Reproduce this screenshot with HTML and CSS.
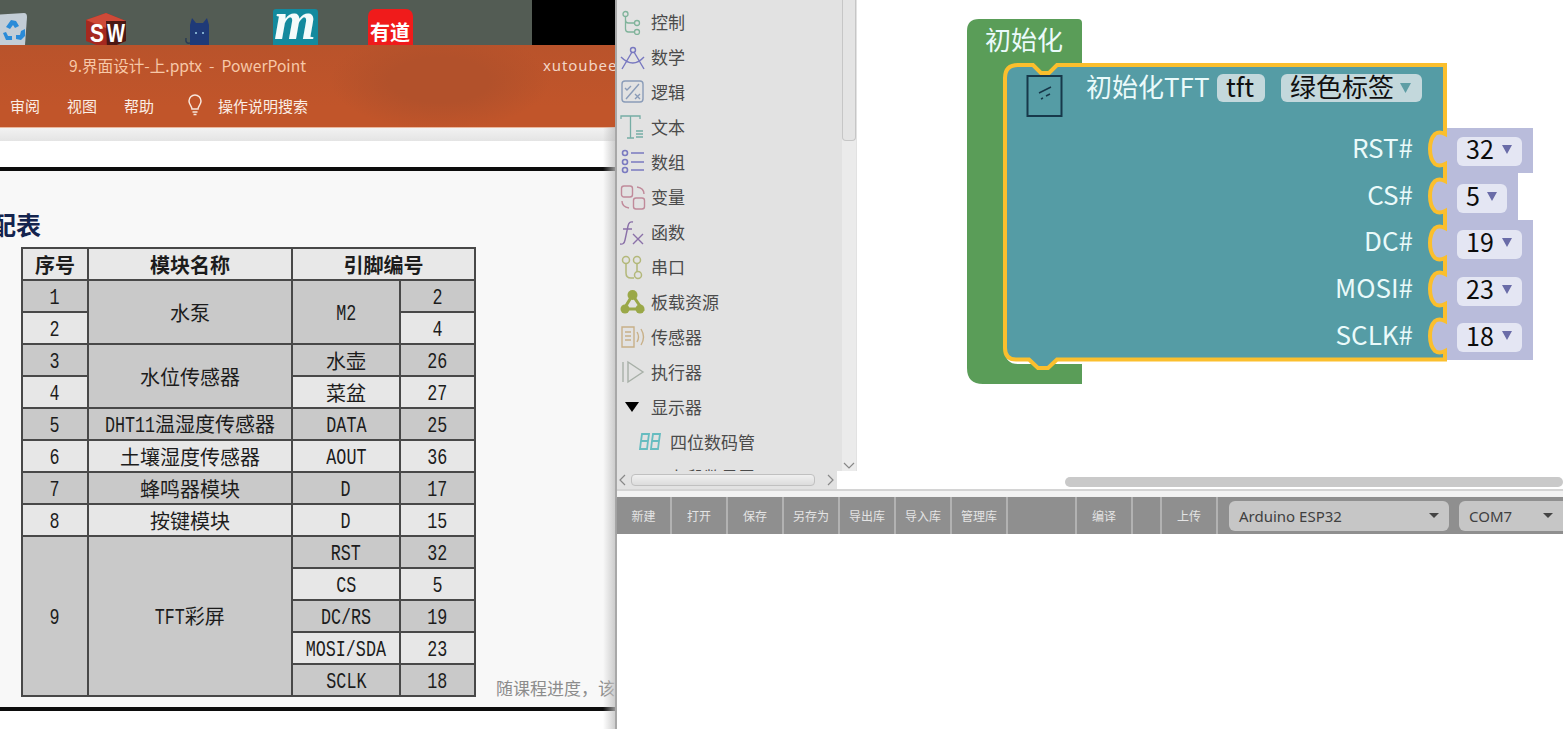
FILE: index.html
```html
<!DOCTYPE html>
<html lang="zh">
<head>
<meta charset="utf-8">
<title>Mixly</title>
<link rel="stylesheet" href="styles.css">
</head>
<body>
<div class="app">
  <section class="left">
    <div class="desktop">
      <svg class="desk-icons" width="532" height="45" viewBox="0 0 532 45">
        <path d="M-6 15 L24 13 Q27 13 27 17 L25 45 H-6Z" fill="#c3cdd6"/>
        <path d="M6 27l5-7 5 1 3 5-4 2-2-3-3 4zM3 33l3-1 2 4h4v4H6zM25 29l-4 2-1 4h-4v4l5 1 4-4z" fill="#2a8bd8"/>
        <path d="M86 20L106 13l20 8v20l-19 8-21-8z" fill="#a5281f"/>
        <path d="M86 20L106 13l20 8-20 7z" fill="#cf4a38"/>
        <path d="M106 21h20v20l-19 8z" fill="#4a1814"/>
        <text class="sw" x="90" y="42" textLength="14" lengthAdjust="spacingAndGlyphs">S</text>
        <text class="sw" x="107" y="42" textLength="18" lengthAdjust="spacingAndGlyphs">W</text>
        <path d="M190 45V25l2-7 4 5h7l4-5 2 7v20z" fill="#1f3a78"/>
        <circle cx="196" cy="33" r="1" fill="#9fd0e8"/><circle cx="203" cy="33" r="1" fill="#9fd0e8"/>
        <path d="M190 43q-5 1-4-5" fill="none" stroke="#2b3c54" stroke-width="1.500"/>
        <rect x="273" y="9" width="45" height="40" rx="3" fill="#138a9e"/>
        <text class="mm" x="295" y="39">m</text>
        <rect x="368" y="9" width="45" height="42" rx="7" fill="#f01b1b"/>
        <text class="yd" x="390" y="40">有道</text>
      </svg>
      <div class="desk-black"></div>
    </div>
    <div class="ppt-head">
      <div class="ppt-title">
        <span class="doc">9.界面设计-上.pptx&nbsp; -&nbsp; PowerPoint</span>
        <span class="user">xutoubee</span>
      </div>
      <div class="ppt-tabs">
        <span class="tab">审阅</span>
        <span class="tab">视图</span>
        <span class="tab">帮助</span>
        <svg class="bulb" width="18" height="22" viewBox="0 0 18 22"><path d="M6 15c0-3-3-4-3-8a6 6 0 0 1 12 0c0 4-3 5-3 8zM6.500 18h5M7.500 20.500h3" fill="none" stroke="#f7e6dc" stroke-width="1.500"/></svg>
        <span class="tab search">操作说明搜索</span>
      </div>
    </div>
    <div class="ppt-strip"></div>
    <div class="ppt-white"></div>
    <div class="slide">
      <h2 class="slide-title">配表</h2>
      <div class="slide-body">
        <table class="pins">
          <colgroup><col class="c1"><col class="c2"><col class="c3"><col class="c4"></colgroup>
          <thead>
            <tr class="head"><th>序号</th><th>模块名称</th><th colspan="2">引脚编号</th></tr>
          </thead>
          <tbody>
            <tr>
              <td class="d"><span class="m">1</span></td>
              <td class="d" rowspan="2">水泵</td>
              <td class="d" rowspan="2"><span class="m">M2</span></td>
              <td class="d"><span class="m">2</span></td>
            </tr>
            <tr><td class="l"><span class="m">2</span></td><td class="l"><span class="m">4</span></td></tr>
            <tr>
              <td class="d"><span class="m">3</span></td>
              <td class="d" rowspan="2">水位传感器</td>
              <td class="d">水壶</td>
              <td class="d"><span class="m">26</span></td>
            </tr>
            <tr><td class="l"><span class="m">4</span></td><td class="l">菜盆</td><td class="l"><span class="m">27</span></td></tr>
            <tr><td class="d"><span class="m">5</span></td><td class="d"><span class="m m5">DHT11</span>温湿度传感器</td><td class="d"><span class="m">DATA</span></td><td class="d"><span class="m">25</span></td></tr>
            <tr><td class="l"><span class="m">6</span></td><td class="l">土壤湿度传感器</td><td class="l"><span class="m">AOUT</span></td><td class="l"><span class="m">36</span></td></tr>
            <tr><td class="d"><span class="m">7</span></td><td class="d">蜂鸣器模块</td><td class="d"><span class="m">D</span></td><td class="d"><span class="m">17</span></td></tr>
            <tr><td class="l"><span class="m">8</span></td><td class="l">按键模块</td><td class="l"><span class="m">D</span></td><td class="l"><span class="m">15</span></td></tr>
            <tr>
              <td class="d" rowspan="5"><span class="m">9</span></td>
              <td class="d" rowspan="5"><span class="m m3">TFT</span>彩屏</td>
              <td class="d"><span class="m">RST</span></td>
              <td class="d"><span class="m">32</span></td>
            </tr>
            <tr><td class="l"><span class="m">CS</span></td><td class="l"><span class="m">5</span></td></tr>
            <tr><td class="d"><span class="m">DC/RS</span></td><td class="d"><span class="m">19</span></td></tr>
            <tr><td class="l"><span class="m">MOSI/SDA</span></td><td class="l"><span class="m">23</span></td></tr>
            <tr><td class="d"><span class="m">SCLK</span></td><td class="d"><span class="m">18</span></td></tr>
          </tbody>
        </table>
        <p class="note">随课程进度，该表格将不断更新</p>
      </div>
    </div>
    <div class="ppt-foot"></div>
  </section>

  <section class="right">
    <div class="workspace">
      <aside class="sidebar">
        <div class="side-main">
          <ul class="cats">
            <li class="cat">
              <svg class="ic" width="26" height="26" viewBox="0 0 26 26" fill="none" stroke="#7fb39a" stroke-width="1.300"><circle cx="5.500" cy="5" r="2.500"/><circle cx="17" cy="14" r="2.500"/><circle cx="17" cy="23" r="2.500"/><path d="M5.500 8v12q0 3 3 3h6M5.500 11q0 3 3 3h6"/></svg>
              <span>控制</span>
            </li>
            <li class="cat">
              <svg class="ic" width="26" height="26" viewBox="0 0 26 26" fill="none" stroke="#7878c0" stroke-width="1.400"><circle cx="13" cy="6" r="2.500"/><path d="M12 8L2 25M14 8l10 17M1 13q12 12 23 0"/></svg>
              <span>数学</span>
            </li>
            <li class="cat">
              <svg class="ic" width="26" height="26" viewBox="0 0 26 26" fill="none" stroke="#8a9cb8" stroke-width="1.400"><rect x="2" y="2" width="21" height="21" rx="3"/><path d="M6 20L19 5M5 9l2 2 4-4M15 15l5 5M20 15l-5 5"/></svg>
              <span>逻辑</span>
            </li>
            <li class="cat">
              <svg class="ic" width="26" height="26" viewBox="0 0 26 26" fill="none" stroke="#76ada5" stroke-width="1.300"><path d="M1 5V2h19v3M10.500 2v22M7 24h7M16 17h7M16 20h7M16 23h7"/></svg>
              <span>文本</span>
            </li>
            <li class="cat">
              <svg class="ic" width="26" height="26" viewBox="0 0 26 26" fill="none" stroke="#7a7ac0" stroke-width="1.600"><circle cx="5" cy="4" r="2.500"/><circle cx="5" cy="13" r="2.500"/><circle cx="5" cy="21" r="2.500"/><path d="M11 4h13M11 13h13M11 21h13"/></svg>
              <span>数组</span>
            </li>
            <li class="cat">
              <svg class="ic" width="26" height="26" viewBox="0 0 26 26" fill="none" stroke="#c08a9a" stroke-width="1.400"><rect x="1.500" y="2" width="11" height="11" rx="2.500"/><rect x="13.500" y="14" width="11" height="11" rx="2.500"/><path d="M17 3q7 1 7 7M9 24q-7-1-7-7"/></svg>
              <span>变量</span>
            </li>
            <li class="cat">
              <svg class="ic" width="26" height="26" viewBox="0 0 26 26" fill="none" stroke="#8a70a8" stroke-width="1.400"><path d="M13 3q-4-1-5 4l-3 14q-1 5-5 4M3 10h9M13 15l10 10M23 15L13 25"/></svg>
              <span>函数</span>
            </li>
            <li class="cat">
              <svg class="ic" width="26" height="26" viewBox="0 0 26 26" fill="none" stroke="#b3b87a" stroke-width="1.500"><circle cx="6" cy="6" r="3.500"/><circle cx="17" cy="6" r="3.500"/><circle cx="18" cy="21" r="3.500"/><path d="M6 9.500V19q0 5 5 5h3M17 9.500v8"/></svg>
              <span>串口</span>
            </li>
            <li class="cat">
              <svg class="ic" width="26" height="26" viewBox="0 0 26 26" fill="#9aa848"><path d="M12.500 6L4 20h18z" fill="none" stroke="#9aa848" stroke-width="3"/><circle cx="12.500" cy="6" r="5"/><circle cx="5" cy="20" r="4.500"/><circle cx="20" cy="20" r="4.500"/><circle cx="12.500" cy="15" r="2.500" fill="#e2e2e2"/></svg>
              <span>板载资源</span>
            </li>
            <li class="cat">
              <svg class="ic" width="26" height="26" viewBox="0 0 26 26" fill="none" stroke="#c8b088" stroke-width="1.400"><path d="M2 3h12v20H2zM5 8h6M5 12h6M5 16h6M17 8q3 5 0 10M21 5q5 8 0 16"/></svg>
              <span>传感器</span>
            </li>
            <li class="cat">
              <svg class="ic" width="26" height="26" viewBox="0 0 26 26" fill="none" stroke="#a8b0a8" stroke-width="1.400"><path d="M3 3v20M8 3l15 10L8 23z"/></svg>
              <span>执行器</span>
            </li>
            <li class="cat">
              <svg class="ic" width="26" height="26" viewBox="0 0 26 26"><path d="M5 8h14l-7 10z" fill="#000"/></svg>
              <span>显示器</span>
            </li>
            <li class="cat sub">
              <svg class="ic" width="26" height="26" viewBox="0 0 26 26" fill="none" stroke="#66bcc0" stroke-width="1.800"><path d="M4 5h7l-1 7h-7zM3 12h7l-1 8H2zM15 5h7l-1 7h-7zM14 12h7l-1 8h-7z"/></svg>
              <span>四位数码管</span>
            </li>
            <li class="cat sub">
              <svg class="ic" width="26" height="26" viewBox="0 0 26 26"></svg>
              <span>七段数显屏</span>
            </li>
          </ul>
          <div class="vscroll">
            <div class="vthumb"></div>
            <svg class="varrow" width="12" height="8" viewBox="0 0 12 8"><path d="M1 1l5 5 5-5" fill="none" stroke="#888" stroke-width="1.200"/></svg>
          </div>
        </div>
        <div class="hscroll">
          <svg width="8" height="12" viewBox="0 0 8 12"><path d="M7 1L2 6l5 5" fill="none" stroke="#888" stroke-width="1.200"/></svg>
          <div class="hthumb"></div>
          <svg width="8" height="12" viewBox="0 0 8 12"><path d="M1 1l5 5-5 5" fill="none" stroke="#888" stroke-width="1.200"/></svg>
          <div class="corner"></div>
        </div>
      </aside>
      <div class="canvas">
        <svg class="blocks" width="706" height="489" viewBox="857 0 706 489">
          <path class="b-green" d="M979 19H1078a4 4 0 0 1 4 4V65H1060V76H1005V350Q1005 364 1018 364H1082V384H983Q967 384 967 368V31Q967 19 979 19Z"/>
          <text class="t-white" x="985" y="50">初始化</text>

          <g class="b-val">
            <rect x="1430" y="128" width="103" height="45"/>
            <rect x="1430" y="173" width="88" height="47"/>
            <rect x="1430" y="220" width="103" height="47"/>
            <rect x="1430" y="267" width="103" height="46"/>
            <rect x="1430" y="313" width="103" height="47"/>
          </g>

          <path class="b-teal" d="M1005 78Q1005 65 1018 65H1033L1041 73H1049L1057 65H1445V134q-6 -3 -10 0q-5 5 -5 15q0 10 5 15q4 3 10 0V181q-6 -3 -10 0q-5 5 -5 15q0 10 5 15q4 3 10 0V228q-6 -3 -10 0q-5 5 -5 15q0 10 5 15q4 3 10 0V274q-6 -3 -10 0q-5 5 -5 15q0 10 5 15q4 3 10 0V321q-6 -3 -10 0q-5 5 -5 15q0 10 5 15q4 3 10 0V359.500H1057L1048 368H1038L1029 359.500H1016Q1005 359.500 1005 348Z"/>

          <rect class="ico-box" x="1027.500" y="76" width="34" height="40"/>
          <path class="ico-line" d="M1039 93l12-6M1041 99l2-1M1046 96l4-2"/>

          <text class="t-white" x="1086" y="97">初始化TFT</text>
          <rect class="f-teal" x="1217" y="74" width="48" height="28" rx="6"/>
          <text class="t-black" x="1226" y="97">tft</text>
          <rect class="f-teal" x="1281" y="74" width="141" height="28" rx="6"/>
          <text class="t-black" x="1290" y="97">绿色标签</text>
          <path class="tri-teal" d="M1400 83h11l-5.500 10z"/>

          <text class="t-white t-end" x="1413" y="158">RST#</text>
          <text class="t-white t-end" x="1413" y="205">CS#</text>
          <text class="t-white t-end" x="1413" y="251">DC#</text>
          <text class="t-white t-end" x="1413" y="298">MOSI#</text>
          <text class="t-white t-end" x="1413" y="345">SCLK#</text>

          <rect class="f-val" x="1457" y="137" width="65" height="29" rx="6"/>
          <rect class="f-val" x="1457" y="184" width="50" height="29" rx="6"/>
          <rect class="f-val" x="1457" y="230" width="65" height="29" rx="6"/>
          <rect class="f-val" x="1457" y="277" width="65" height="29" rx="6"/>
          <rect class="f-val" x="1457" y="323" width="65" height="29" rx="6"/>
          <text class="t-num" x="1466" y="159">32</text>
          <text class="t-num" x="1466" y="206">5</text>
          <text class="t-num" x="1466" y="252">19</text>
          <text class="t-num" x="1466" y="299">23</text>
          <text class="t-num" x="1466" y="346">18</text>
          <path class="tri-val" d="M1502 145h10l-5 9zM1487 192h10l-5 9zM1502 238h10l-5 9zM1502 285h10l-5 9zM1502 331h10l-5 9z"/>

          <rect class="thumb-h" x="1065" y="477" width="498" height="10" rx="5"/>
        </svg>
      </div>
    </div>
    <div class="divider"></div>
    <nav class="toolbar">
      <span class="tb w55">新建</span>
      <span class="tb w56">打开</span>
      <span class="tb w56">保存</span>
      <span class="tb w56">另存为</span>
      <span class="tb w56">导出库</span>
      <span class="tb w56">导入库</span>
      <span class="tb w56">管理库</span>
      <span class="tb w69"></span>
      <span class="tb w56">编译</span>
      <span class="tb w29"></span>
      <span class="tb w56">上传</span>
      <div class="sel board"><span>Arduino ESP32</span><i class="caret"></i></div>
      <div class="sel port"><span>COM7</span><i class="caret"></i></div>
    </nav>
    <div class="console"></div>
  </section>
</div>
</body>
</html>
```
FILE: styles.css
```css
* { box-sizing: border-box; }
html, body { margin: 0; padding: 0; height: 100%; background: #fff; overflow: hidden; }
body { font-family: "Noto Sans CJK SC", "Noto Sans", sans-serif; }
.app { display: flex; width: 1563px; height: 729px; overflow: hidden; }

/* ---------- left: PowerPoint ---------- */
.left { position: relative; width: 615px; flex: none; height: 729px; overflow: hidden; display: flex; flex-direction: column; background: #fff; }
.left::after { content: ""; position: absolute; top: 127px; right: 0; bottom: 0; width: 12px; background: linear-gradient(to right, rgba(200,200,200,0), rgba(190,190,190,.75)); }

.desktop { height: 45px; flex: none; display: flex; background: #535c54; overflow: hidden; }
.desk-icons { flex: none; display: block; }
.desk-black { flex: 1; background: #000; }
.sw { font: bold 25px "Liberation Sans", sans-serif; fill: #fff; }
.mm { font: italic bold 54px "Liberation Serif", serif; fill: #f4fbfb; text-anchor: middle; }
.yd { font: bold 20px "Noto Sans CJK SC", sans-serif; fill: #fff; text-anchor: middle; }

.ppt-head { height: 82px; flex: none; display: flex; flex-direction: column; color: #fff;
  background:
    radial-gradient(ellipse 110px 50px at 440px 35px, #b2512b 45%, rgba(178,81,43,0)),
    linear-gradient(#b9532b, #c1552a 75%); }
.ppt-title { height: 40px; display: flex; align-items: center; justify-content: space-between; padding-left: 69px; font-size: 15.600px; }
.doc { color: #f7c8a8; }
.user { color: #f3d6c6; font-family: "Noto Sans", sans-serif; font-size: 15px; letter-spacing: .9px; width: 72px; white-space: nowrap; }
.ppt-tabs { flex: 1; display: flex; align-items: center; padding-left: 10px; font-size: 15px; color: #fbeee6; padding-bottom: 2px; }
.tab { width: 57px; flex: none; }
.tab.search { width: auto; margin-left: 14px; }
.bulb { flex: none; margin-left: 5px; }
.ppt-strip { height: 14px; flex: none; background: linear-gradient(#f2f2f2, #e4e4e4); border-top: 1px solid #eab79d; }
.ppt-white { height: 26px; flex: none; background: #fff; }
.slide { height: 544px; flex: none; border-top: 4px solid #0c0c0c; border-bottom: 4px solid #0c0c0c; background: #f8f8f8; display: flex; flex-direction: column; }
.slide-title { margin: 35px 0 0 -9px; font-size: 25px; line-height: 36px; font-weight: 700; color: #14244e; }
.slide-body { display: flex; align-items: flex-end; margin-top: 5px; padding-left: 21px; }
.ppt-foot { flex: 1; background: #fff; }

.pins { table-layout: fixed; width: 453px; flex: none; border-collapse: collapse; border: 2px solid #484848; color: #1c1c1c; font-size: 20px; line-height: 24px; text-align: center; }
.c1 { width: 66px; }
.c2 { width: 204px; }
.c3 { width: 108px; }
.c4 { width: 75px; }
.pins tr { height: 32px; }
.pins th, .pins td { border: 2px solid #484848; overflow: visible; white-space: nowrap; }
.pins td { padding: 2px 0 0; }
.pins th { padding: 1px 0 0; background: #e8e8e8; font-weight: 700; font-size: 20px; }
.d { background: #c9c9c9; }
.l { background: #e7e7e7; }
.m { display: inline-block; font-family: "Liberation Mono", monospace; font-size: 22px; line-height: 22px; transform: scaleX(.76); }
.m5 { margin: 0 -8px; }
.m3 { margin: 0 -5px; }
.note { flex: none; margin: 0 0 -4px 20px; font-size: 17px; line-height: 26px; color: #8c8c8c; white-space: nowrap; }

/* ---------- right: Mixly ---------- */
.right { flex: 1; min-width: 0; height: 729px; display: flex; flex-direction: column; background: #fff; border-left: 2px solid #a8a8a8; }
.workspace { height: 489px; flex: none; display: flex; }
.sidebar { width: 240px; flex: none; display: flex; flex-direction: column; background: #e2e2e2; }
.side-main { flex: 1; min-height: 0; display: flex; }
.cats { flex: 1; margin: 0; padding: 4px 0 0; list-style: none; overflow: hidden; color: #4b4b4b; font-size: 17px; }
.cat { height: 35px; display: flex; align-items: center; padding-left: 3px; white-space: nowrap; }
.cat span { margin-left: 5px; }
.cat.sub { padding-left: 21px; }
.cat.sub span { margin-left: 6px; }
.ic { flex: none; }
.vscroll { width: 14px; flex: none; margin-right: 1px; background: #ebebeb; display: flex; flex-direction: column; align-items: center; justify-content: space-between; padding-bottom: 1px; }
.vthumb { width: 14px; height: 141px; background: #e4e4e4; border: 1px solid #c6c6c6; border-top: 0; border-radius: 0 0 4px 4px; }
.hscroll { height: 18px; flex: none; display: flex; align-items: center; padding-left: 1px; background: #e2e2e2; }
.hthumb { width: 184px; height: 12px; flex: none; margin: 0 12px 0 5px; border: 1px solid #c0c0c0; border-radius: 4px; background: linear-gradient(#f0f0f0, #dcdcdc); }
.corner { flex: 1; align-self: stretch; margin-left: 2px; background: #fff; }
.canvas { flex: 1; min-width: 0; background: #fff; }
.blocks { display: block; }
.b-green { fill: #5a9d58; }
.b-val rect { fill: #b9bcdb; }
.b-teal { fill: #559ca5; stroke: #fbbf2d; stroke-width: 4; }
.ico-box { fill: none; stroke: #17384a; stroke-width: 2; }
.ico-line { fill: none; stroke: #17384a; stroke-width: 1.500; }
.t-white { font-size: 26px; fill: #eafafa; }
.t-end { text-anchor: end; }
.t-black { font-size: 26px; fill: #101010; }
.t-num { font-size: 25px; fill: #0c0c0c; }
.f-teal { fill: #c3d8dc; }
.f-val { fill: #e4e6f3; }
.tri-teal { fill: #5f9ea5; }
.tri-val { fill: #6a6ca8; }
.thumb-h { fill: #c9c9c9; }

.divider { height: 8px; flex: none; background: #f3f3f3; border-top: 2px solid #d4d4d4; }
.toolbar { height: 37px; flex: none; display: flex; align-items: stretch; background: #8f8f8f; color: #e4e4e4; font-size: 12px; box-shadow: 0 1px 2px rgba(0,0,0,.12); }
.tb { flex: none; display: flex; align-items: center; justify-content: center; border-right: 2px solid #b2b2b2; }
.w55 { width: 55px; }
.w56 { width: 56px; }
.w69 { width: 69px; }
.w29 { width: 29px; }
.sel { flex: none; display: flex; align-items: center; justify-content: space-between; height: 30px; align-self: center; background: #c6c6c6; border-radius: 6px; color: #3f3f3f; font-family: "Noto Sans", sans-serif; font-size: 15px; padding: 0 10px; }
.board { width: 220px; margin-left: 11px; }
.port { flex: 1; margin-left: 10px; border-radius: 6px 0 0 6px; }
.caret { width: 0; height: 0; border-left: 5px solid transparent; border-right: 5px solid transparent; border-top: 5px solid #444; }
.console { flex: 1; background: #fff; }
```
